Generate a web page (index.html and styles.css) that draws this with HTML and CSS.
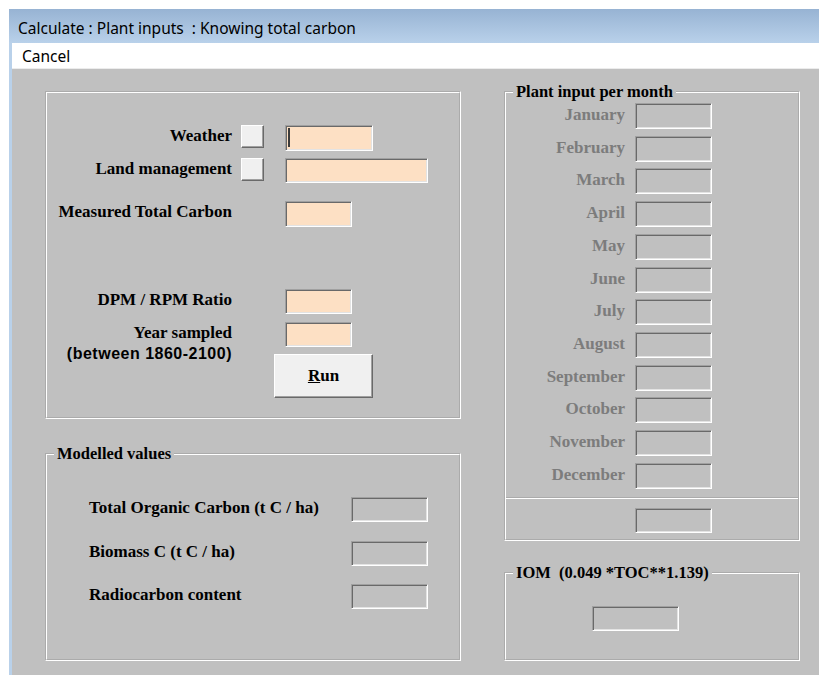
FILE: index.html
```html
<!DOCTYPE html>
<html lang="en">
<head>
<meta charset="utf-8">
<title>Calculate : Plant inputs : Knowing total carbon</title>
<link rel="stylesheet" href="styles.css">
</head>
<body>
<div class="window">
  <div class="titlebar">Calculate : Plant inputs  : Knowing total carbon</div>
  <div class="menubar"><span class="menu-item">Cancel</span></div>

  <div class="client">
    <div class="col col-left">
      <div class="group group-inputs">
        <div class="row">
          <span class="label">Weather</span>
          <span class="slot"><span class="check"></span></span>
          <span class="field peach w-88 h-26"><span class="caret"></span></span>
        </div>
        <div class="row row-land">
          <span class="label">Land management</span>
          <span class="slot"><span class="check"></span></span>
          <span class="field peach w-143 h-25"></span>
        </div>
        <div class="row row-measured">
          <span class="label">Measured Total Carbon</span>
          <span class="slot"></span>
          <span class="field peach w-67 h-26"></span>
        </div>
        <div class="row row-ratio">
          <span class="label">DPM / RPM Ratio</span>
          <span class="slot"></span>
          <span class="field peach w-67 h-25"></span>
        </div>
        <div class="row row-year">
          <span class="label">Year sampled</span>
          <span class="slot"></span>
          <span class="field peach w-67 h-25"></span>
        </div>
        <div class="row">
          <span class="label note">(between 1860-2100)</span>
          <button class="button run" type="button"><u>R</u>un</button>
        </div>
      </div>

      <fieldset class="group group-model">
        <legend>Modelled values</legend>
        <div class="model-body">
          <div class="model-row">
            <span class="model-label">Total Organic Carbon (t C / ha)</span>
            <span class="field w-77 h-25"></span>
          </div>
          <div class="model-row gap-19">
            <span class="model-label">Biomass C (t C / ha)</span>
            <span class="field w-77 h-25"></span>
          </div>
          <div class="model-row gap-18">
            <span class="model-label">Radiocarbon content</span>
            <span class="field w-77 h-25"></span>
          </div>
        </div>
      </fieldset>
    </div>

    <div class="col col-right">
      <fieldset class="group group-months">
        <legend>Plant input per month</legend>
        <div class="months">
          <div class="month-row"><span class="month-label">January</span><span class="field w-77 h-26"></span></div>
          <div class="month-row"><span class="month-label">February</span><span class="field w-77 h-26"></span></div>
          <div class="month-row"><span class="month-label">March</span><span class="field w-77 h-26"></span></div>
          <div class="month-row"><span class="month-label">April</span><span class="field w-77 h-26"></span></div>
          <div class="month-row"><span class="month-label">May</span><span class="field w-77 h-26"></span></div>
          <div class="month-row"><span class="month-label">June</span><span class="field w-77 h-26"></span></div>
          <div class="month-row"><span class="month-label">July</span><span class="field w-77 h-26"></span></div>
          <div class="month-row"><span class="month-label">August</span><span class="field w-77 h-26"></span></div>
          <div class="month-row"><span class="month-label">September</span><span class="field w-77 h-26"></span></div>
          <div class="month-row"><span class="month-label">October</span><span class="field w-77 h-26"></span></div>
          <div class="month-row"><span class="month-label">November</span><span class="field w-77 h-26"></span></div>
          <div class="month-row"><span class="month-label">December</span><span class="field w-77 h-26"></span></div>
        </div>
        <div class="divider"></div>
        <span class="field total w-77 h-25"></span>
      </fieldset>

      <fieldset class="group group-iom">
        <legend>IOM  (0.049 *TOC**1.139)</legend>
        <span class="field iom w-87 h-25"></span>
      </fieldset>
    </div>
  </div>
</div>
</body>
</html>
```

FILE: styles.css
```css
* {
  box-sizing: border-box;
}

html,
body {
  margin: 0;
  height: 100%;
}

body {
  background: #ffffff;
  overflow: hidden;
}

/* ---- window frame ---- */
.window {
  margin: 9px 0 0 9px;
  height: 666px;
  background: #b9d1ea;
  display: flex;
  flex-direction: column;
}

.titlebar {
  height: 34px;
  flex: none;
  padding: 8px 0 0 9px;
  background: linear-gradient(#97b3d3, #b9d1ea);
  font: 15.5px/22px "Noto Sans", "Open Sans", sans-serif;
  color: #000000;
  white-space: pre;
}

.menubar {
  height: 26px;
  flex: none;
  margin-left: 3px;
  padding-left: 10px;
  background: #ffffff;
  border-bottom: 1px solid #ececec;
  font: 15.5px/26px "Noto Sans", "Open Sans", sans-serif;
  color: #000000;
}

.client {
  flex: 1;
  margin-left: 3px;
  padding: 14px 0 0 33px;
  background: #c0c0c0;
  display: grid;
  grid-template-columns: 416px 296px;
  column-gap: 43px;
  align-items: start;
}

.col {
  display: flex;
  flex-direction: column;
}

.col-left {
  padding-top: 8px;
}

/* ---- etched group boxes ---- */
.group {
  margin: 0;
  padding: 0;
  min-width: 0;
  border: 2px groove #ffffff;
}

.group legend {
  margin-left: 7px;
  padding: 0 3px;
  font: bold 16.5px/18px "Liberation Serif", serif;
  color: #000000;
  white-space: pre;
}

.group-inputs {
  height: 328px;
  padding-top: 32px;
}

.group-model {
  height: 216px;
  margin-top: 26px;
}

.group-months {
  height: 458px;
}

.group-iom {
  height: 97px;
  margin-top: 23px;
}

/* ---- input rows ---- */
.row {
  display: flex;
  align-items: flex-start;
}

.row-land {
  margin-top: 7px;
}

.row-measured {
  margin-top: 18px;
}

.row-ratio {
  margin-top: 62px;
}

.row-year {
  margin-top: 8px;
}

.label {
  width: 185px;
  flex: none;
  text-align: right;
  font: bold 17px/22px "Liberation Serif", serif;
  color: #000000;
  white-space: nowrap;
}

.label.note {
  font: bold 16px/14px "Liberation Sans", sans-serif;
  letter-spacing: 0.5px;
}

.slot {
  width: 53px;
  flex: none;
  display: flex;
}

.check {
  display: block;
  width: 23px;
  height: 23px;
  margin-left: 9px;
  background: #f0f0f0;
  border: 1px solid;
  border-color: #ffffff #696969 #696969 #ffffff;
  box-shadow: inset -1px -1px 0 #a0a0a0;
}

.button {
  display: block;
  margin: 7px 0 0 42px;
  padding: 0;
  width: 99px;
  height: 44px;
  background: #f0f0f0;
  border: 1px solid;
  border-color: #ffffff #696969 #696969 #ffffff;
  box-shadow: inset -1px -1px 0 #a0a0a0;
  font: bold 17px "Liberation Serif", serif;
  color: #000000;
}

/* ---- sunken text fields ---- */
.field {
  display: block;
  flex: none;
  background: #c0c0c0;
  border: 1px solid;
  border-color: #a0a0a0 #ffffff #ffffff #a0a0a0;
  box-shadow: inset 1px 1px 0 #696969, inset -1px -1px 0 #e3e3e3;
}

.peach {
  background: #fde0c4;
}

.caret {
  display: block;
  width: 2px;
  height: 19px;
  margin: 2px 0 0 2px;
  background: #3c3c3c;
}

.w-67 { width: 67px; }
.w-77 { width: 77px; }
.w-87 { width: 87px; }
.w-88 { width: 88px; }
.w-143 { width: 143px; }
.h-25 { height: 25px; }
.h-26 { height: 26px; }

/* ---- modelled values ---- */
.model-body {
  padding: 34px 0 0 42px;
}

.model-row {
  display: flex;
  align-items: flex-start;
}

.gap-19 {
  margin-top: 19px;
}

.gap-18 {
  margin-top: 18px;
}

.model-label {
  width: 262px;
  flex: none;
  font: bold 17px/21px "Liberation Serif", serif;
  color: #000000;
  white-space: nowrap;
}

/* ---- monthly plant input ---- */
.months {
  padding-top: 2px;
  display: flex;
  flex-direction: column;
  gap: 6.73px;
}

.month-row {
  display: flex;
  align-items: flex-start;
}

.month-label {
  width: 119px;
  margin-right: 10px;
  flex: none;
  text-align: right;
  font: bold 17px/24px "Liberation Serif", serif;
  color: #7c7c7c;
}

.divider {
  margin-top: 8px;
  height: 2px;
  border-top: 1px solid #ababab;
  border-bottom: 1px solid #ffffff;
}

.total {
  margin: 9px 0 0 129px;
}

.iom {
  margin: 24px 0 0 86px;
}
```
